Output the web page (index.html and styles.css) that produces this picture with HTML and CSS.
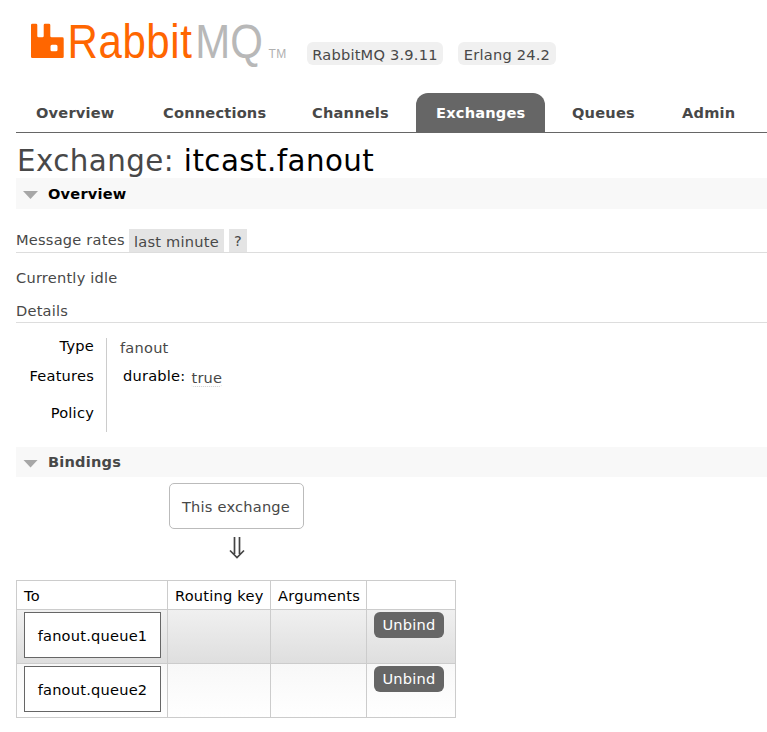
FILE: index.html
```html
<!DOCTYPE html>
<html lang="en">
<head>
<meta charset="utf-8">
<title>RabbitMQ Management</title>
<link rel="stylesheet" href="styles.css">
</head>
<body>
<header>
  <svg class="logo" width="262" height="46" viewBox="0 0 262 46" role="img" aria-label="RabbitMQ">
    <path fill="#f60" fill-rule="evenodd" d="M15 5q0-1.300 1.300-1.300h3.700q1.300 0 1.300 1.300v11q0 1.300 1.300 1.300h3.800q1.300 0 1.300-1.300v-11q0-1.300 1.300-1.300h4q1.300 0 1.300 1.300v11q0 1.300 1.300 1.300h10.700q1.400 0 1.400 1.400v18q0 1.400-1.400 1.400h-30q-1.300 0-1.300-1.300zM36 24.700q-1.500 0-1.500 1.500v3.500q0 1.500 1.500 1.500h4q1.500 0 1.500-1.500v-3.500q0-1.500-1.500-1.500z"/>
    <text class="brand" transform="translate(51.500 38) scale(.875 1)">Rabbit<tspan class="mq" dx="3">MQ</tspan></text>
    <text class="tm" x="252.500" y="38">TM</text>
  </svg>
  <span class="version v1">RabbitMQ 3.9.11</span>
  <span class="version v2">Erlang 24.2</span>
</header>
<nav>
  <a>Overview</a><a>Connections</a><a>Channels</a><a class="selected">Exchanges</a><a>Queues</a><a>Admin</a>
</nav>
<main>
  <h1>Exchange: <b>itcast.fanout</b></h1>
  <h2 class="active"><i></i>Overview</h2>
  <div class="rates"><span class="label">Message rates</span><span class="tag">last minute</span><span class="tag help">?</span></div>
  <p class="idle">Currently idle</p>
  <h3>Details</h3>
  <dl>
    <dt>Type</dt><dd>fanout</dd>
    <dt>Features</dt><dd class="feature"><span>durable:</span><abbr>true</abbr></dd>
    <dt>Policy</dt><dd></dd>
  </dl>
  <h2><i></i>Bindings</h2>
  <div class="bindings">
    <div class="exchange">This exchange</div>
    <svg class="arrow" width="16" height="22" viewBox="0 0 16 22" fill="none" stroke="#444" stroke-width="1.700"><path d="M5.500 0v17M10.500 0v17M1 13.500l7 7 7-7"/></svg>
    <table>
      <tr><th>To</th><th>Routing key</th><th>Arguments</th><th></th></tr>
      <tr class="alt"><td><span class="queue">fanout.queue1</span></td><td></td><td></td><td><button>Unbind</button></td></tr>
      <tr class="plain"><td><span class="queue">fanout.queue2</span></td><td></td><td></td><td><button>Unbind</button></td></tr>
    </table>
  </div>
</main>
</body>
</html>
```
FILE: styles.css
```css
* { box-sizing: border-box; }
body { margin: 0; padding-left: 16px; height: 732px; overflow: hidden; background: #fff; color: #484848; font: 14.6px/20px Verdana, "DejaVu Sans", sans-serif; letter-spacing: 0.22px; white-space: nowrap; }
header { height: 93px; display: flex; align-items: flex-start; }
.logo { display: block; margin-top: 20px; overflow: visible; }
.brand { font: 48px "Liberation Sans", sans-serif; letter-spacing: 0.7px; fill: #f60; }
.mq { fill: #b8b8b8; letter-spacing: 0; }
.tm { font: 12px "Liberation Sans", sans-serif; letter-spacing: 0.3px; fill: #b0b0b0; }
.version { height: 23px; margin-top: 42px; border-radius: 6px; background: #f0f0f0; text-align: center; line-height: 25px; }
.v1 { width: 136px; margin-left: 29px; }
.v2 { width: 98px; margin-left: 15px; }
nav { height: 40px; display: grid; grid-template-columns: 127px 149px 124px 129px 117px 106px; border-bottom: 1px solid #666; font-weight: bold; letter-spacing: 0.2px; }
nav a { padding-left: 20px; line-height: 39px; }
nav .selected { background: #666; color: #fff; border-radius: 12px 12px 0 0; }
nav .selected + a { padding-left: 27px; }
h1 { margin: 0; height: 45px; padding-left: 1px; font-size: 29.3px; line-height: 56px; font-weight: normal; letter-spacing: 0.45px; }
h1 b { font-weight: normal; color: #000; }
h2 { margin: 0; height: 31px; padding-left: 7px; display: flex; align-items: center; background: #f8f8f8; font-size: 14.6px; letter-spacing: 0.2px; }
h2 i { width: 15px; height: 8px; margin: 3px 10px 0 0; background: #a7a7a7; clip-path: polygon(0 0, 100% 0, 50% 100%); }
.active { color: #000; }
.rates { display: flex; align-items: flex-end; height: 44px; border-bottom: 1px solid #ddd; }
.label { width: 113px; line-height: 24px; }
.tag { width: 95px; height: 23px; margin-right: 5px; background: #e4e4e4; text-align: center; line-height: 25px; }
.help { width: 18px; line-height: 23px; }
.idle { margin: 15px 0 13px; }
h3 { margin: 0; height: 22px; border-bottom: 1px solid #ddd; font-size: 14.6px; line-height: 20px; font-weight: normal; }
dl { margin: 15px 0 15px; height: 94px; display: grid; grid-template-columns: 91px 1fr; grid-template-rows: 24px 36px 34px; }
dt { padding-right: 12px; border-right: 1px solid #ccc; text-align: right; color: #000; line-height: 16px; }
dt:nth-of-type(2) { line-height: 28px; }
dt:nth-of-type(3) { line-height: 30px; }
dd { margin: 0; padding-left: 13px; line-height: 20px; }
.feature { display: flex; align-items: flex-start; padding-left: 16px; color: #000; line-height: 28px; }
abbr { height: 17px; margin: 8px 0 0 6px; border-bottom: 1px dotted #ccc; border-radius: 3px; color: #484848; line-height: 16px; }
main h2:nth-of-type(2) { height: 30px; }
.bindings { width: 440px; display: flex; flex-direction: column; align-items: center; padding-top: 6px; }
.exchange { width: 135px; height: 46px; border: 1px solid #bbb; border-radius: 5px; text-align: center; line-height: 46px; }
.arrow { margin: 8px 0 21px; transform: translateX(1px); }
table { width: 440px; table-layout: fixed; border-collapse: collapse; color: #000; }
th, td { height: 54px; padding: 2px 7px; border: 1px solid #ccc; text-align: left; vertical-align: top; font-weight: normal; }
th { height: 29px; padding-top: 5px; }
th:nth-child(1) { width: 151px; }
th:nth-child(2) { width: 103px; }
th:nth-child(3) { width: 96px; }
.alt { background: linear-gradient(#f0f0f0, #dedede); }
.plain { background: linear-gradient(#f8f8f8, #fff); }
.queue { display: block; width: 137px; height: 46px; border: 1px solid #666; background: #fff; text-align: center; line-height: 46px; }
button { display: block; width: 70px; height: 26px; padding: 0; border: 0; border-radius: 6px; background: #666; color: #fff; font: inherit; letter-spacing: inherit; }
```
